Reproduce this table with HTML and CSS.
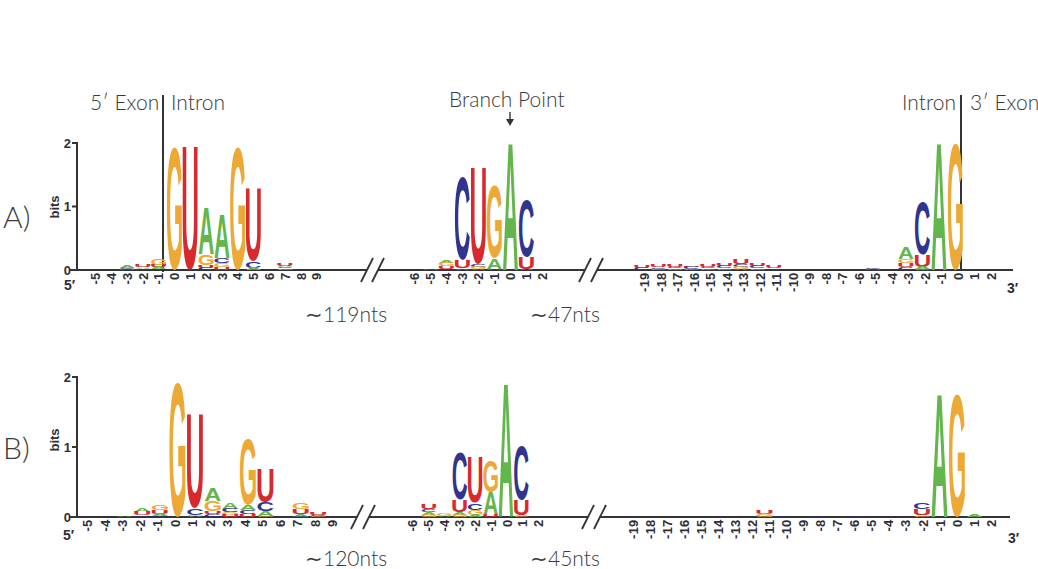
FILE: index.html
```html
<!DOCTYPE html>
<html lang="en">
<head>
<meta charset="utf-8">
<title>Splice site sequence logos</title>
<link rel="stylesheet" href="styles.css">
</head>
<body>
<main class="figure">
  <svg class="panel panel-a" viewBox="0 85 1038 260" width="1038" height="260" xmlns="http://www.w3.org/2000/svg">
    <text class="headline" x="90" y="110">5′ Exon</text>
    <text class="headline" x="171" y="110">Intron</text>
    <line class="sep" x1="163" y1="95" x2="163" y2="272"/>
    <text class="headline" x="449" y="107">Branch Point</text>
    <line class="arrow" x1="510" y1="112" x2="510" y2="120"/>
    <polygon class="arrow-head" points="506,119 514,119 510,126"/>
    <text class="headline" x="956" y="110" text-anchor="end">Intron</text>
    <line class="sep" x1="961" y1="95" x2="961" y2="271"/>
    <text class="headline" x="970" y="110">3′ Exon</text>

    <text class="panel-label" x="3" y="228">A)</text>
    <text class="bits" transform="translate(59 207) rotate(-90)" text-anchor="middle">bits</text>
    <line class="axis" x1="77" y1="142" x2="77" y2="271"/>
    <line class="axis" x1="72" y1="143" x2="77" y2="143"/>
    <line class="axis" x1="72" y1="206.5" x2="77" y2="206.5"/>
    <text class="tick" x="71" y="148" text-anchor="end">2</text>
    <text class="tick" x="71" y="211" text-anchor="end">1</text>
    <text class="tick" x="71" y="275" text-anchor="end">0</text>

    <line class="axis" x1="70" y1="270" x2="367" y2="270"/>
    <line class="axis" x1="378" y1="270" x2="585" y2="270"/>
    <line class="axis" x1="597" y1="270" x2="1013" y2="270"/>
    <line class="brk" x1="361" y1="282" x2="373" y2="258"/>
    <line class="brk" x1="372" y1="282" x2="384" y2="258"/>
    <line class="brk" x1="579" y1="282" x2="591" y2="258"/>
    <line class="brk" x1="591" y1="282" x2="603" y2="258"/>

    <text class="end" x="64" y="290">5′</text>
    <text class="end" x="1007" y="293">3′</text>
    <text class="gap" x="305" y="322">∼119nts</text>
    <text class="gap" x="530" y="322">∼47nts</text>

    <g id="logoA"></g>
  </svg>

  <svg class="panel panel-b" viewBox="0 345 1038 224" width="1038" height="224" xmlns="http://www.w3.org/2000/svg">
    <text class="panel-label" x="3" y="459">B)</text>
    <text class="bits" transform="translate(59 440) rotate(-90)" text-anchor="middle">bits</text>
    <line class="axis" x1="77" y1="376" x2="77" y2="518"/>
    <line class="axis" x1="72" y1="377" x2="77" y2="377"/>
    <line class="axis" x1="72" y1="447" x2="77" y2="447"/>
    <text class="tick" x="71" y="382" text-anchor="end">2</text>
    <text class="tick" x="71" y="452" text-anchor="end">1</text>
    <text class="tick" x="71" y="522" text-anchor="end">0</text>

    <line class="axis" x1="70" y1="517" x2="357" y2="517"/>
    <line class="axis" x1="369" y1="517" x2="588" y2="517"/>
    <line class="axis" x1="600" y1="517" x2="1010" y2="517"/>
    <line class="brk" x1="351" y1="529" x2="363" y2="505"/>
    <line class="brk" x1="363" y1="529" x2="375" y2="505"/>
    <line class="brk" x1="582" y1="529" x2="594" y2="505"/>
    <line class="brk" x1="594" y1="529" x2="606" y2="505"/>

    <text class="end" x="63" y="540">5′</text>
    <text class="end" x="1008" y="543">3′</text>
    <text class="gap" x="305" y="566">∼120nts</text>
    <text class="gap" x="530" y="566">∼45nts</text>

    <g id="logoB"></g>
  </svg>
</main>
<script src="logo.js"></script>
</body>
</html>
```

FILE: styles.css
```css
html, body {
  margin: 0;
  padding: 0;
  background: #ffffff;
}

.figure {
  display: flex;
  flex-direction: column;
  width: 1038px;
  height: 569px;
  padding-top: 85px;
  box-sizing: border-box;
  overflow: hidden;
}

.panel {
  display: block;
  overflow: visible;
}

.headline {
  font-family: Lato, "Open Sans", sans-serif;
  font-weight: 300;
  font-size: 21px;
  fill: #3a3a3a;
}

.panel-label {
  font-family: Lato, "Open Sans", sans-serif;
  font-weight: 300;
  font-size: 30px;
  fill: #3a3a3a;
}

.gap {
  font-family: Lato, "Open Sans", sans-serif;
  font-weight: 300;
  font-size: 21px;
  fill: #3a3a3a;
}

.bits {
  font-family: "Liberation Sans", Arial, sans-serif;
  font-weight: 700;
  font-size: 13px;
  fill: #2e2e38;
}

.tick {
  font-family: "Liberation Sans", Arial, sans-serif;
  font-weight: 700;
  font-size: 13px;
  fill: #2e2e38;
}

.end {
  font-family: "Liberation Sans", Arial, sans-serif;
  font-weight: 700;
  font-size: 14px;
  fill: #2e2e38;
}

.pos {
  font-family: "Liberation Sans", Arial, sans-serif;
  font-weight: 700;
  font-size: 13px;
  letter-spacing: 0.2px;
  fill: #2e2e38;
}

.axis {
  stroke: #333338;
  stroke-width: 2;
}

.sep {
  stroke: #333338;
  stroke-width: 2;
}

.brk {
  stroke: #333338;
  stroke-width: 1.8;
}

.arrow {
  stroke: #333338;
  stroke-width: 1.4;
}

.arrow-head {
  fill: #333338;
}

.nt {
  font-family: "Liberation Sans", Arial, sans-serif;
  font-weight: 700;
  font-size: 100px;
}

.nt-A { fill: #62b64b; }
.nt-C { fill: #30348f; }
.nt-G { fill: #eda936; }
.nt-U { fill: #d8292f; }
```

FILE: logo.js
```js
(function () {
  var NS = 'http://www.w3.org/2000/svg';
  var ctx = document.createElement('canvas').getContext('2d');
  ctx.font = 'bold 100px "Liberation Sans"';
  var fallback = {
    A: [0.3, 72, 71.6, 0],
    C: [-4, 68, 73, 1.2],
    G: [-4, 73, 73, 1.2],
    U: [-7.5, 65, 71.6, 1.2]
  };
  var metrics = {};
  ['A', 'C', 'G', 'U'].forEach(function (l) {
    var m = ctx.measureText(l);
    if (m && typeof m.actualBoundingBoxAscent === 'number' && m.actualBoundingBoxAscent > 0) {
      metrics[l] = [m.actualBoundingBoxLeft, m.actualBoundingBoxRight, m.actualBoundingBoxAscent, m.actualBoundingBoxDescent];
    } else {
      metrics[l] = fallback[l];
    }
  });

  function letter(g, l, x, y, w, h) {
    var m = metrics[l];
    var inkW = m[0] + m[1];
    var inkH = m[2] + m[3];
    var t = document.createElementNS(NS, 'text');
    t.setAttribute('class', 'nt nt-' + l);
    t.setAttribute('x', '0');
    t.setAttribute('y', '0');
    t.setAttribute('transform',
      'translate(' + x + ' ' + y + ') scale(' + (w / inkW) + ' ' + (h / inkH) + ') translate(' + m[0] + ' ' + m[2] + ')');
    t.textContent = l;
    g.appendChild(t);
  }

  function stack(g, cx, w, base, spec) {
    var items = spec.split(' ').map(function (s) {
      var p = s.split(':');
      return [p[0], parseFloat(p[1])];
    });
    var total = items.reduce(function (a, b) { return a + b[1]; }, 0);
    var y = base - total;
    items.forEach(function (it) {
      letter(g, it[0], cx - w / 2, y, w, it[1]);
      y += it[1];
    });
  }

  function labels(g, base, c0, step, from, to) {
    for (var i = from; i <= to; i++) {
      var x = c0 + step * i;
      var t = document.createElementNS(NS, 'text');
      t.setAttribute('class', 'pos');
      t.setAttribute('text-anchor', 'end');
      t.setAttribute('transform', 'translate(' + (x + 4.6) + ' ' + (base + 2.5) + ') rotate(-90)');
      t.textContent = String(i);
      g.appendChild(t);
    }
  }

  var panels = [
    {
      id: 'logoA', base: 270,
      sections: [
        { c0: 174.5, step: 15.8, w: 15, cols: {
          '-3': 'A:2 C:1.5 U:1', '-2': 'U:2 A:1.5 C:1', '-1': 'G:6 U:2 A:2 C:1',
          '0': 'G:123', '1': 'U:124', '2': 'A:47 G:11 U:3 C:2', '3': 'A:44 C:5 G:4 U:3',
          '4': 'G:122', '5': 'U:73 C:7 A:2', '7': 'U:2 A:1 C:1.5 G:1.5'
        } },
        { c0: 510.5, step: 16, w: 15, cols: {
          '-5': 'U:1.5', '-4': 'A:3 G:4 U:2.5 C:1', '-3': 'C:83 U:8 A:1.5',
          '-2': 'U:96 C:3 G:2 A:1', '-1': 'G:72 A:10 U:1.5', '0': 'A:127', '1': 'C:56 U:12 A:1'
        } },
        { c0: 955.5, step: 16.5, w: 15, cols: {
          '-19': 'U:2 C:2', '-18': 'U:2 C:1.5 G:1', '-17': 'U:2 C:1 G:1.5', '-16': 'U:1.5 C:2 G:1',
          '-15': 'U:3 C:1.5 G:1.5', '-14': 'U:3 C:2 G:1.5', '-13': 'U:5 C:3 G:2 A:1',
          '-12': 'U:3 C:2 G:1.5', '-11': 'U:2 C:1.5', '-5': 'C:1.5 U:1',
          '-3': 'A:11 G:4 U:4 C:3', '-2': 'C:53 U:12 A:2 G:1', '-1': 'A:127', '0': 'G:127'
        } }
      ],
      labels: [[174.5, 15.8, -5, 9], [510.5, 16, -6, 2], [958, 16.5, -19, 2]]
    },
    {
      id: 'logoB', base: 517,
      sections: [
        { c0: 177.5, step: 17.6, w: 16, cols: {
          '-3': 'A:1', '-2': 'A:4 U:3.5 C:1.5', '-1': 'G:5 U:4 A:2 C:1', '0': 'G:134',
          '1': 'U:93 C:7 G:1.5 A:0.5', '2': 'A:13 G:10 U:3 C:3', '3': 'A:6 C:4 G:2.5 U:2',
          '4': 'G:66 A:5 C:4 U:3', '5': 'U:34 C:9 A:5 G:1', '7': 'G:6 U:5 A:2.5 C:0.5',
          '8': 'U:3 C:1.5 G:0.5'
        } },
        { c0: 506, step: 15.4, w: 14.5, cols: {
          '-5': 'U:5 C:3 A:3 G:2', '-4': 'G:2.5 A:1', '-3': 'C:47 U:12 A:3 G:2',
          '-2': 'U:45 C:7 G:5 A:2', '-1': 'G:32 A:23 U:2', '0': 'A:134', '1': 'C:54 U:15 A:1 G:1'
        } },
        { c0: 957, step: 17.5, w: 16, cols: {
          '-11': 'U:4 G:2.5', '-10': 'C:1', '-8': 'C:1.2', '-6': 'C:1.2',
          '-2': 'C:7 U:6 G:1.5', '-1': 'A:124', '0': 'G:122', '1': 'A:2'
        } }
      ],
      labels: [[175, 17.5, -5, 9], [507, 15.75, -6, 2], [957, 17.05, -19, 2]]
    }
  ];

  panels.forEach(function (p) {
    var g = document.getElementById(p.id);
    if (!g) return;
    p.sections.forEach(function (s) {
      Object.keys(s.cols).forEach(function (k) {
        var i = parseInt(k, 10);
        stack(g, s.c0 + s.step * i, s.w, p.base, s.cols[k]);
      });
    });
    p.labels.forEach(function (l) {
      labels(g, p.base, l[0], l[1], l[2], l[3]);
    });
  });
})();
```
